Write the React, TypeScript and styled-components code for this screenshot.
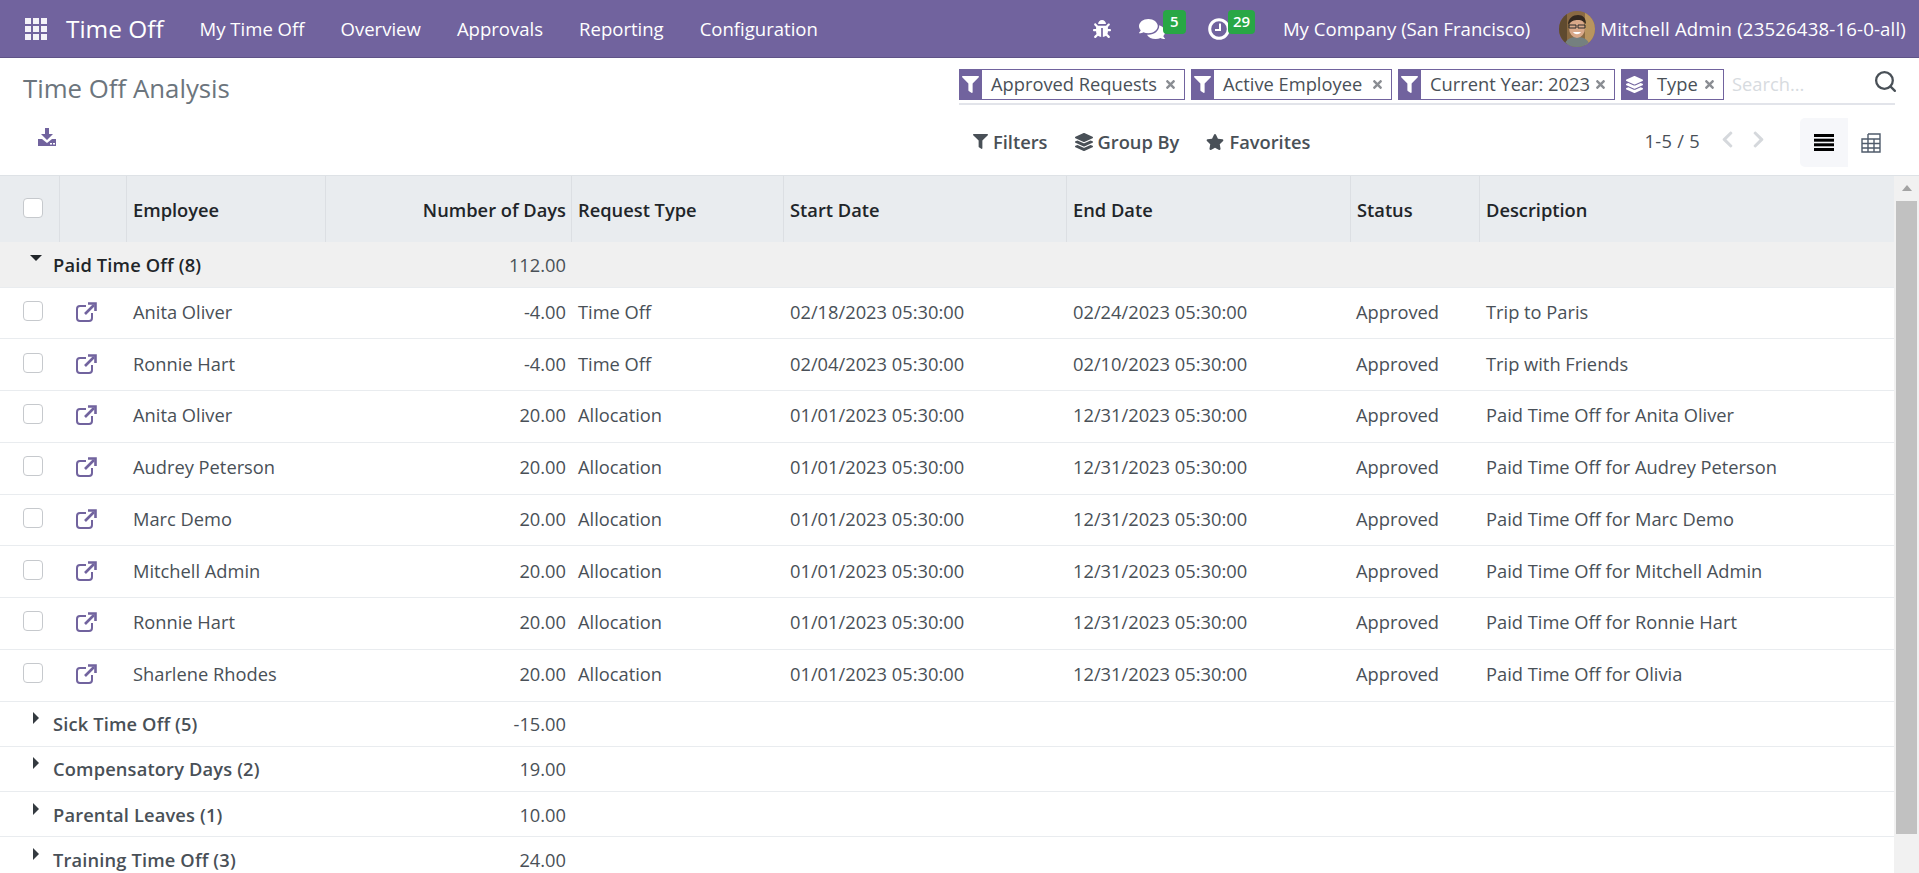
import styled, { createGlobalStyle } from 'styled-components';
import { Search } from 'lucide-react';
import {
	FaBug,
	FaChevronLeft,
	FaChevronRight,
	FaComments,
	FaFilter,
	FaLayerGroup,
	FaStar,
	FaTimes,
} from 'react-icons/fa';

const COLUMNS = '59px 67px 199px 246px 212px 283px 284px 129px 1fr';
const PURPLE = '#71639e';

const GlobalStyle = createGlobalStyle`
	html, body {
		margin: 0;
		height: 100%;
		overflow: hidden;
		background: #fff;
	}
	body {
		font-family: "Open Sans", "Noto Sans", sans-serif;
		font-size: 18.3px;
		color: #495057;
	}
`;

const Page = styled.div`
	height: 873px;
	display: flex;
	flex-direction: column;
	overflow: hidden;
`;

const NavBar = styled.header`
	height: 58px;
	flex: none;
	box-sizing: border-box;
	background: ${PURPLE};
	border-bottom: 1px solid #5f5387;
	color: #fff;
	display: flex;
	align-items: center;
	padding: 0 13px 0 25px;
`;

const AppsIcon = styled.svg`
	width: 22px;
	height: 22px;
	fill: #f4f2f8;
	margin-right: 19px;
`;

const BrandName = styled.span`
	font-size: 24.4px;
	margin-right: 18px;
`;

const MenuLink = styled.a`
	padding: 0 18px;
	font-size: 18.55px;
	white-space: nowrap;
`;

const NavRight = styled.div`
	margin-left: auto;
	display: flex;
	align-items: center;
`;

const NavIcon = styled.span`
	position: relative;
	display: flex;
	align-items: center;
	font-size: ${(p) => p.$size}px;
	margin-right: ${(p) => p.$gap}px;
`;

const Badge = styled.span`
	position: absolute;
	top: ${(p) => p.$top}px;
	left: ${(p) => p.$left}px;
	min-width: 23px;
	height: 24px;
	padding: 0 5px;
	box-sizing: border-box;
	border-radius: 4px;
	background: #28a745;
	color: #fff;
	font-size: 15px;
	font-weight: 600;
	line-height: 22px;
	text-align: center;
`;

const CompanyName = styled.span`
	font-size: 18.6px;
	white-space: nowrap;
	margin-right: 29px;
`;

const UserName = styled.span`
	font-size: 18.6px;
	letter-spacing: 0.17px;
	white-space: nowrap;
	margin-left: 5px;
`;

const Avatar = styled.svg`
	width: 36px;
	height: 36px;
	border-radius: 50%;
	display: block;
`;

const ControlPanel = styled.section`
	height: 118px;
	flex: none;
	box-sizing: border-box;
	display: flex;
	justify-content: space-between;
	padding: 11px 24px 0 23px;
	border-bottom: 1px solid #dee2e6;
`;

const PanelLeft = styled.div`
	display: flex;
	flex-direction: column;
`;

const PageTitle = styled.h1`
	margin: 2px 0 0;
	font-size: 25.8px;
	font-weight: 400;
	line-height: 34px;
	color: #6c757d;
`;

const DownloadIcon = styled.svg`
	width: 20px;
	height: 20px;
	margin: 22px 0 0 14px;
	fill: ${PURPLE};
`;

const PanelRight = styled.div`
	width: 936px;
	display: flex;
	flex-direction: column;
`;

const SearchBar = styled.div`
	height: 36px;
	box-sizing: border-box;
	display: flex;
	align-items: flex-start;
	gap: 6px;
	border-bottom: 2px solid #e2e4ea;
`;

const Facet = styled.div`
	height: 31px;
	box-sizing: border-box;
	width: ${(p) => p.$width}px;
	flex: none;
	display: flex;
	align-items: center;
	border: 1px solid ${PURPLE};
	white-space: nowrap;
`;

const FacetIcon = styled.span`
	align-self: stretch;
	flex: none;
	width: ${(p) => p.$width || 23}px;
	margin: -1px 0 -1px -1px;
	background: ${PURPLE};
	color: #fff;
	display: flex;
	align-items: center;
	justify-content: center;
	font-size: 17px;
`;

const FacetLabel = styled.span`
	flex: 1;
	padding: 0 0 2px 9px;
`;

const FacetRemove = styled.span`
	display: flex;
	color: #8a8d93;
	font-size: 13px;
	margin-right: 7px;
`;

const SearchPlaceholder = styled.span`
	flex: 1;
	line-height: 29px;
	padding-left: 2px;
	color: #d7dbe0;
`;

const SearchIcon = styled(Search)`
	flex: none;
	margin-right: -3px;
	color: #495057;
`;

const Toolbar = styled.div`
	height: 49px;
	margin-top: 13px;
	display: flex;
	align-items: center;
	margin-right: -1px;
`;

const ToolButton = styled.span`
	display: flex;
	align-items: center;
	gap: 5px;
	padding: 0 0 2px 14px;
	margin-right: 13px;
	font-weight: 600;
	white-space: nowrap;
	svg {
		font-size: ${(p) => p.$iconSize || 18}px;
	}
`;

const Pager = styled.span`
	margin-left: auto;
	padding-bottom: 4px;
	letter-spacing: 0.3px;
	white-space: nowrap;
`;

const PagerArrow = styled.span`
	display: flex;
	font-size: 19px;
	color: #d5d8dc;
	margin: 0 0 7px ${(p) => p.$gap}px;
`;

const ViewButton = styled.span`
	width: 48px;
	height: 49px;
	box-sizing: border-box;
	display: flex;
	align-items: center;
	justify-content: center;
	background: ${(p) => (p.$active ? '#f6f7fa' : 'transparent')};
	border-radius: 5px 0 0 5px;
	margin-left: ${(p) => p.$gap || 0}px;
	&:last-child {
		padding-right: 2px;
	}
`;

const ListBody = styled.div`
	flex: 1;
	min-height: 0;
	display: flex;
`;

const TableArea = styled.div`
	flex: 1;
	min-width: 0;
`;

const HeaderRow = styled.div`
	height: 66px;
	display: grid;
	grid-template-columns: ${COLUMNS};
	background: #e9ecef;
	color: #212529;
	font-weight: 600;
`;

const HeaderCell = styled.div`
	display: flex;
	align-items: center;
	justify-content: ${(p) => (p.$right ? 'flex-end' : 'flex-start')};
	padding: 0 5px 0 6px;
	border-left: 1px solid #dcdfe3;
	white-space: nowrap;
`;

const CheckCell = styled.div`
	display: flex;
	align-items: center;
	padding: 0 0 ${(p) => (p.$header ? 2 : 4)}px 23px;
`;

const Check = styled.span`
	width: 20px;
	height: 20px;
	box-sizing: border-box;
	background: #fff;
	border: 1px solid #c6c9cd;
	border-radius: 4px;
	display: block;
`;

const GroupRow = styled.div`
	height: ${(p) => (p.$open ? 45.5 : 45.3)}px;
	box-sizing: border-box;
	display: grid;
	grid-template-columns: 325px 246px;
	align-items: center;
	background: ${(p) => (p.$open ? '#f0f0f0' : '#fff')};
	border-bottom: 1px solid #e9ecef;
`;

const GroupName = styled.div`
	position: relative;
	padding-left: 53px;
	font-weight: 600;
	letter-spacing: 0.15px;
	color: ${(p) => (p.$open ? '#212529' : '#495057')};
	white-space: nowrap;
`;

const Caret = styled.span`
	position: absolute;
	left: ${(p) => (p.$open ? 30 : 33)}px;
	top: ${(p) => (p.$open ? 3 : 1)}px;
	width: 0;
	height: 0;
	${(p) =>
		p.$open
			? 'border-left: 6px solid transparent; border-right: 6px solid transparent; border-top: 6px solid #212529;'
			: 'border-top: 6px solid transparent; border-bottom: 6px solid transparent; border-left: 6px solid #343a40;'}
`;

const GroupValue = styled.div`
	text-align: right;
	padding-right: 5px;
`;

const DataRow = styled.div`
	height: 51.75px;
	box-sizing: border-box;
	display: grid;
	grid-template-columns: ${COLUMNS};
	align-items: center;
	background: #fff;
	border-bottom: 1px solid #e9ecef;
`;

const DataCell = styled.div`
	padding: 0 ${(p) => (p.$right ? 5 : 7)}px 3px ${(p) => (p.$tight ? 6 : 7)}px;
	text-align: ${(p) => (p.$right ? 'right' : 'left')};
	white-space: nowrap;
`;

const OpenIcon = styled.svg`
	display: block;
	width: 21px;
	height: 20px;
	margin: -2px 0 0 17px;
	fill: none;
	stroke: ${PURPLE};
	stroke-width: 2;
`;

const ScrollTrack = styled.div`
	width: 25px;
	flex: none;
	box-sizing: border-box;
	padding: 0 2px;
	background: #f1f1f1;
	display: flex;
	flex-direction: column;
`;

const ScrollArrow = styled.span`
	height: 25px;
	flex: none;
	display: flex;
	justify-content: center;
	padding-top: 9px;
	box-sizing: border-box;
	&::before {
		content: '';
		width: 0;
		height: 0;
		border-left: 5.5px solid transparent;
		border-right: 5.5px solid transparent;
		border-bottom: 6px solid #a3a3a3;
	}
`;

const ScrollThumb = styled.span`
	height: 633px;
	background: #c1c1c1;
`;

const rows = [
	['Anita Oliver', '-4.00', 'Time Off', '02/18/2023 05:30:00', '02/24/2023 05:30:00', 'Trip to Paris'],
	['Ronnie Hart', '-4.00', 'Time Off', '02/04/2023 05:30:00', '02/10/2023 05:30:00', 'Trip with Friends'],
	['Anita Oliver', '20.00', 'Allocation', '01/01/2023 05:30:00', '12/31/2023 05:30:00', 'Paid Time Off for Anita Oliver'],
	['Audrey Peterson', '20.00', 'Allocation', '01/01/2023 05:30:00', '12/31/2023 05:30:00', 'Paid Time Off for Audrey Peterson'],
	['Marc Demo', '20.00', 'Allocation', '01/01/2023 05:30:00', '12/31/2023 05:30:00', 'Paid Time Off for Marc Demo'],
	['Mitchell Admin', '20.00', 'Allocation', '01/01/2023 05:30:00', '12/31/2023 05:30:00', 'Paid Time Off for Mitchell Admin'],
	['Ronnie Hart', '20.00', 'Allocation', '01/01/2023 05:30:00', '12/31/2023 05:30:00', 'Paid Time Off for Ronnie Hart'],
	['Sharlene Rhodes', '20.00', 'Allocation', '01/01/2023 05:30:00', '12/31/2023 05:30:00', 'Paid Time Off for Olivia'],
];

const closedGroups = [
	['Sick Time Off (5)', '-15.00'],
	['Compensatory Days (2)', '19.00'],
	['Parental Leaves (1)', '10.00'],
	['Training Time Off (3)', '24.00'],
];

const facets = [
	{ label: 'Approved Requests', width: 226 },
	{ label: 'Active Employee', width: 201 },
	{ label: 'Current Year: 2023', width: 217 },
];

function AppsGlyph() {
	const cells = [0, 8, 16];
	return (
		<AppsIcon viewBox="0 0 22 22">
			{cells.map((y) => cells.map((x) => <rect key={`${x}-${y}`} x={x} y={y} width="6" height="6" />))}
		</AppsIcon>
	);
}

function ClockGlyph() {
	return (
		<svg width="22" height="22" viewBox="0 0 22 22" fill="none" stroke="currentColor">
			<circle cx="11" cy="11" r="9.3" strokeWidth="3" />
			<path d="M12 5.5V12H7" strokeWidth="2" />
		</svg>
	);
}

function UserAvatar() {
	return (
		<Avatar viewBox="0 0 36 36">
			<rect width="36" height="36" fill="#8a6a43" />
			<rect x="26" width="10" height="36" fill="#b9955f" />
			<rect width="8" height="36" fill="#5f4a2f" />
			<path d="M5 36c1-8 7-10 13-10s12 2 13 10z" fill="#75807f" />
			<ellipse cx="18" cy="17" rx="8" ry="10" fill="#d9a98a" />
			<path d="M9 14c0-7 5-10 10-10s8 3 8 9c-3-3-4-4-8-4s-7 1-10 5z" fill="#33281f" />
			<path d="M10 14h7v3h-7zM19 14h7v3h-7z" fill="none" stroke="#2b2b2b" />
			<path d="M14 21c2 3 6 3 8 0z" fill="#fff" />
		</Avatar>
	);
}

function DownloadGlyph() {
	return (
		<DownloadIcon viewBox="0 0 20 20">
			<path d="M8 1h4v6h4l-6 6-6-6h4z" />
			<path d="M1 12h4l5 4 5-4h4v7H1z" />
			<rect x="13" y="16" width="2" height="1.5" fill="#fff" />
			<rect x="16" y="16" width="2" height="1.5" fill="#fff" />
		</DownloadIcon>
	);
}

function ListViewGlyph() {
	return (
		<svg width="20" height="17" viewBox="0 0 20 17" fill="#000">
			<rect y="0" width="20" height="3" />
			<rect y="4.7" width="20" height="3" />
			<rect y="9.3" width="20" height="3" />
			<rect y="14" width="20" height="3" />
		</svg>
	);
}

function PivotViewGlyph() {
	return (
		<svg width="20" height="20" viewBox="0 0 20 20" fill="none" stroke="#4f5b6b" strokeWidth="1.4">
			<path d="M7 1h12v18H1V6h18M7 1v18M13 6v13M1 10.5h18M1 15h18" />
		</svg>
	);
}

function OpenGlyph() {
	return (
		<OpenIcon viewBox="0 0 21 20">
			<path d="M10 4H4a3 3 0 0 0-3 3v9a3 3 0 0 0 3 3h9a3 3 0 0 0 3-3v-5" />
			<path d="M9 12 18 3" strokeWidth="2.6" />
			<path d="M12 1.5h7.5V9" strokeWidth="2.6" />
		</OpenIcon>
	);
}

function App() {
	return (
		<Page>
			<GlobalStyle />
			<NavBar>
				<AppsGlyph />
				<BrandName>Time Off</BrandName>
				<MenuLink>My Time Off</MenuLink>
				<MenuLink>Overview</MenuLink>
				<MenuLink>Approvals</MenuLink>
				<MenuLink>Reporting</MenuLink>
				<MenuLink>Configuration</MenuLink>
				<NavRight>
					<NavIcon $size={18} $gap={28}>
						<FaBug />
					</NavIcon>
					<NavIcon $size={26} $gap={43}>
						<FaComments />
						<Badge $left={24} $top={-6}>
							5
						</Badge>
					</NavIcon>
					<NavIcon $size={22} $gap={53}>
						<ClockGlyph />
						<Badge $left={20} $top={-8}>
							29
						</Badge>
					</NavIcon>
					<CompanyName>My Company (San Francisco)</CompanyName>
					<UserAvatar />
					<UserName>Mitchell Admin (23526438-16-0-all)</UserName>
				</NavRight>
			</NavBar>
			<ControlPanel>
				<PanelLeft>
					<PageTitle>Time Off Analysis</PageTitle>
					<DownloadGlyph />
				</PanelLeft>
				<PanelRight>
					<SearchBar>
						{facets.map((f) => (
							<Facet key={f.label} $width={f.width}>
								<FacetIcon>
									<FaFilter />
								</FacetIcon>
								<FacetLabel>{f.label}</FacetLabel>
								<FacetRemove>
									<FaTimes />
								</FacetRemove>
							</Facet>
						))}
						<Facet $width={103}>
							<FacetIcon $width={27}>
								<FaLayerGroup />
							</FacetIcon>
							<FacetLabel>Type</FacetLabel>
							<FacetRemove>
								<FaTimes />
							</FacetRemove>
						</Facet>
						<SearchPlaceholder>Search...</SearchPlaceholder>
						<SearchIcon size={25} strokeWidth={2.2} />
					</SearchBar>
					<Toolbar>
						<ToolButton $iconSize={15}>
							<FaFilter />
							Filters
						</ToolButton>
						<ToolButton>
							<FaLayerGroup />
							Group By
						</ToolButton>
						<ToolButton>
							<FaStar />
							Favorites
						</ToolButton>
						<Pager>1-5 / 5</Pager>
						<PagerArrow $gap={18}>
							<FaChevronLeft />
						</PagerArrow>
						<PagerArrow $gap={12}>
							<FaChevronRight />
						</PagerArrow>
						<ViewButton $active $gap={32}>
							<ListViewGlyph />
						</ViewButton>
						<ViewButton>
							<PivotViewGlyph />
						</ViewButton>
					</Toolbar>
				</PanelRight>
			</ControlPanel>
			<ListBody>
				<TableArea>
					<HeaderRow>
						<CheckCell $header>
							<Check />
						</CheckCell>
						<HeaderCell />
						<HeaderCell>Employee</HeaderCell>
						<HeaderCell $right>Number of Days</HeaderCell>
						<HeaderCell>Request Type</HeaderCell>
						<HeaderCell>Start Date</HeaderCell>
						<HeaderCell>End Date</HeaderCell>
						<HeaderCell>Status</HeaderCell>
						<HeaderCell>Description</HeaderCell>
					</HeaderRow>
					<GroupRow $open>
						<GroupName $open>
							<Caret $open />
							Paid Time Off (8)
						</GroupName>
						<GroupValue>112.00</GroupValue>
					</GroupRow>
					{rows.map((r, i) => (
						<DataRow key={i}>
							<CheckCell>
								<Check />
							</CheckCell>
							<OpenGlyph />
							<DataCell>{r[0]}</DataCell>
							<DataCell $right>{r[1]}</DataCell>
							<DataCell>{r[2]}</DataCell>
							<DataCell>{r[3]}</DataCell>
							<DataCell>{r[4]}</DataCell>
							<DataCell $tight>Approved</DataCell>
							<DataCell>{r[5]}</DataCell>
						</DataRow>
					))}
					{closedGroups.map(([name, value]) => (
						<GroupRow key={name}>
							<GroupName>
								<Caret />
								{name}
							</GroupName>
							<GroupValue>{value}</GroupValue>
						</GroupRow>
					))}
				</TableArea>
				<ScrollTrack>
					<ScrollArrow />
					<ScrollThumb />
				</ScrollTrack>
			</ListBody>
		</Page>
	);
}

export default App;
